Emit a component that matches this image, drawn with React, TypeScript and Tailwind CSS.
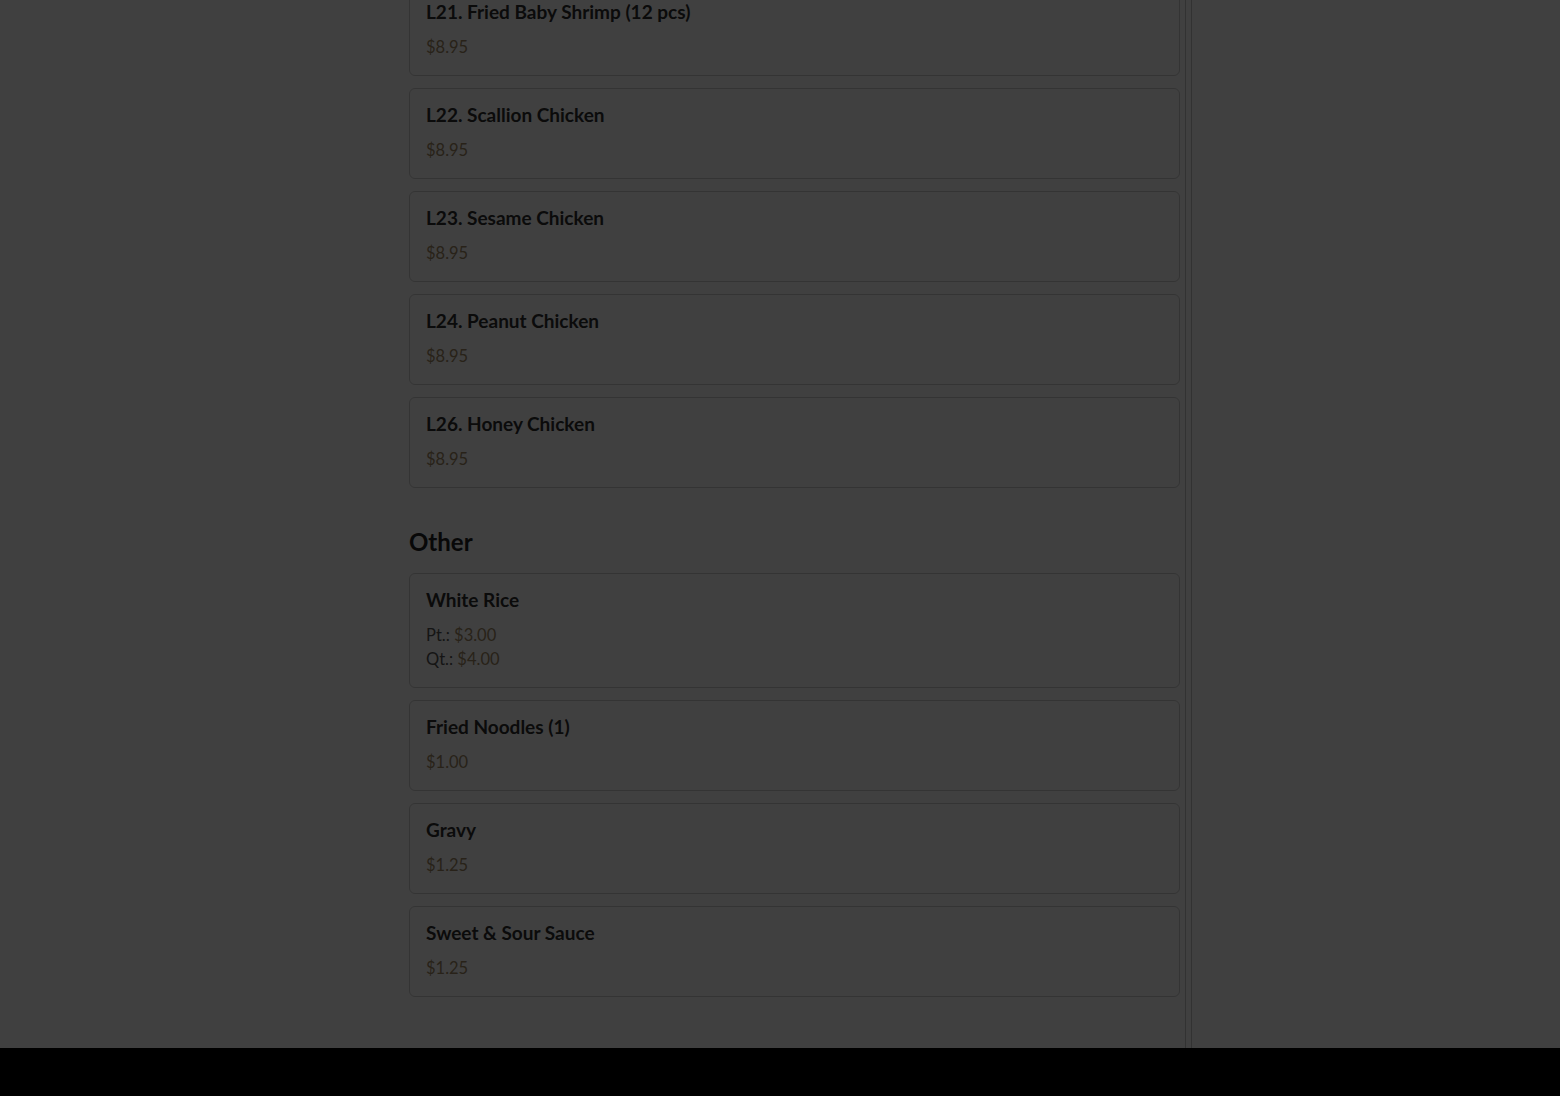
import React from 'react'

type Item = {
  name: string
  prices: { label?: string; value: string }[]
}

const lunchItems: Item[] = [
  { name: 'L21. Fried Baby Shrimp (12 pcs)', prices: [{ value: '$8.95' }] },
  { name: 'L22. Scallion Chicken', prices: [{ value: '$8.95' }] },
  { name: 'L23. Sesame Chicken', prices: [{ value: '$8.95' }] },
  { name: 'L24. Peanut Chicken', prices: [{ value: '$8.95' }] },
  { name: 'L26. Honey Chicken', prices: [{ value: '$8.95' }] },
]

const otherItems: Item[] = [
  {
    name: 'White Rice',
    prices: [
      { label: 'Pt.:', value: '$3.00' },
      { label: 'Qt.:', value: '$4.00' },
    ],
  },
  { name: 'Fried Noodles (1)', prices: [{ value: '$1.00' }] },
  { name: 'Gravy', prices: [{ value: '$1.25' }] },
  { name: 'Sweet & Sour Sauce', prices: [{ value: '$1.25' }] },
]

const MenuCard = ({ item }: { item: Item }) => (
  <div className="rounded-md border border-[#cfcfcf] bg-white px-4 pt-4 pb-4">
    <h3 className="text-[19px] leading-[20px] font-bold text-[#2e2e2e]">{item.name}</h3>
    <div className="mt-[13px] text-[16.5px] leading-6">
      {item.prices.map((p, i) => (
        <div key={i}>
          {p.label && <span className="text-[#555555]">{p.label} </span>}
          <span className="text-[#a08864]">{p.value}</span>
        </div>
      ))}
    </div>
  </div>
)

export default function App() {
  return (
    <div
      className="relative min-h-[1096px] overflow-hidden bg-white"
      style={{ fontFamily: 'Lato, "Open Sans", sans-serif' }}
    >
      <div className="-mt-[15px] flex">
        <div className="w-[409px] shrink-0" />
        <main className="w-[777px] shrink-0 border-r border-[#c8c8c8] pr-[5px] pb-[51px]">
          <div className="flex flex-col gap-3">
            {lunchItems.map((item) => (
              <MenuCard key={item.name} item={item} />
            ))}
          </div>

          <section className="mt-[38px]">
            <h2 className="mb-[15px] text-2xl leading-8 font-bold text-[#222222]">Other</h2>
            <div className="flex flex-col gap-3">
              {otherItems.map((item) => (
                <MenuCard key={item.name} item={item} />
              ))}
            </div>
          </section>
        </main>
        <aside className="ml-[5px] flex-1 border-l border-[#c8c8c8]" />
      </div>

      <footer className="h-[100px] bg-black" />

      {/* modal backdrop */}
      <div className="absolute inset-0 bg-black/75" />
    </div>
  )
}
